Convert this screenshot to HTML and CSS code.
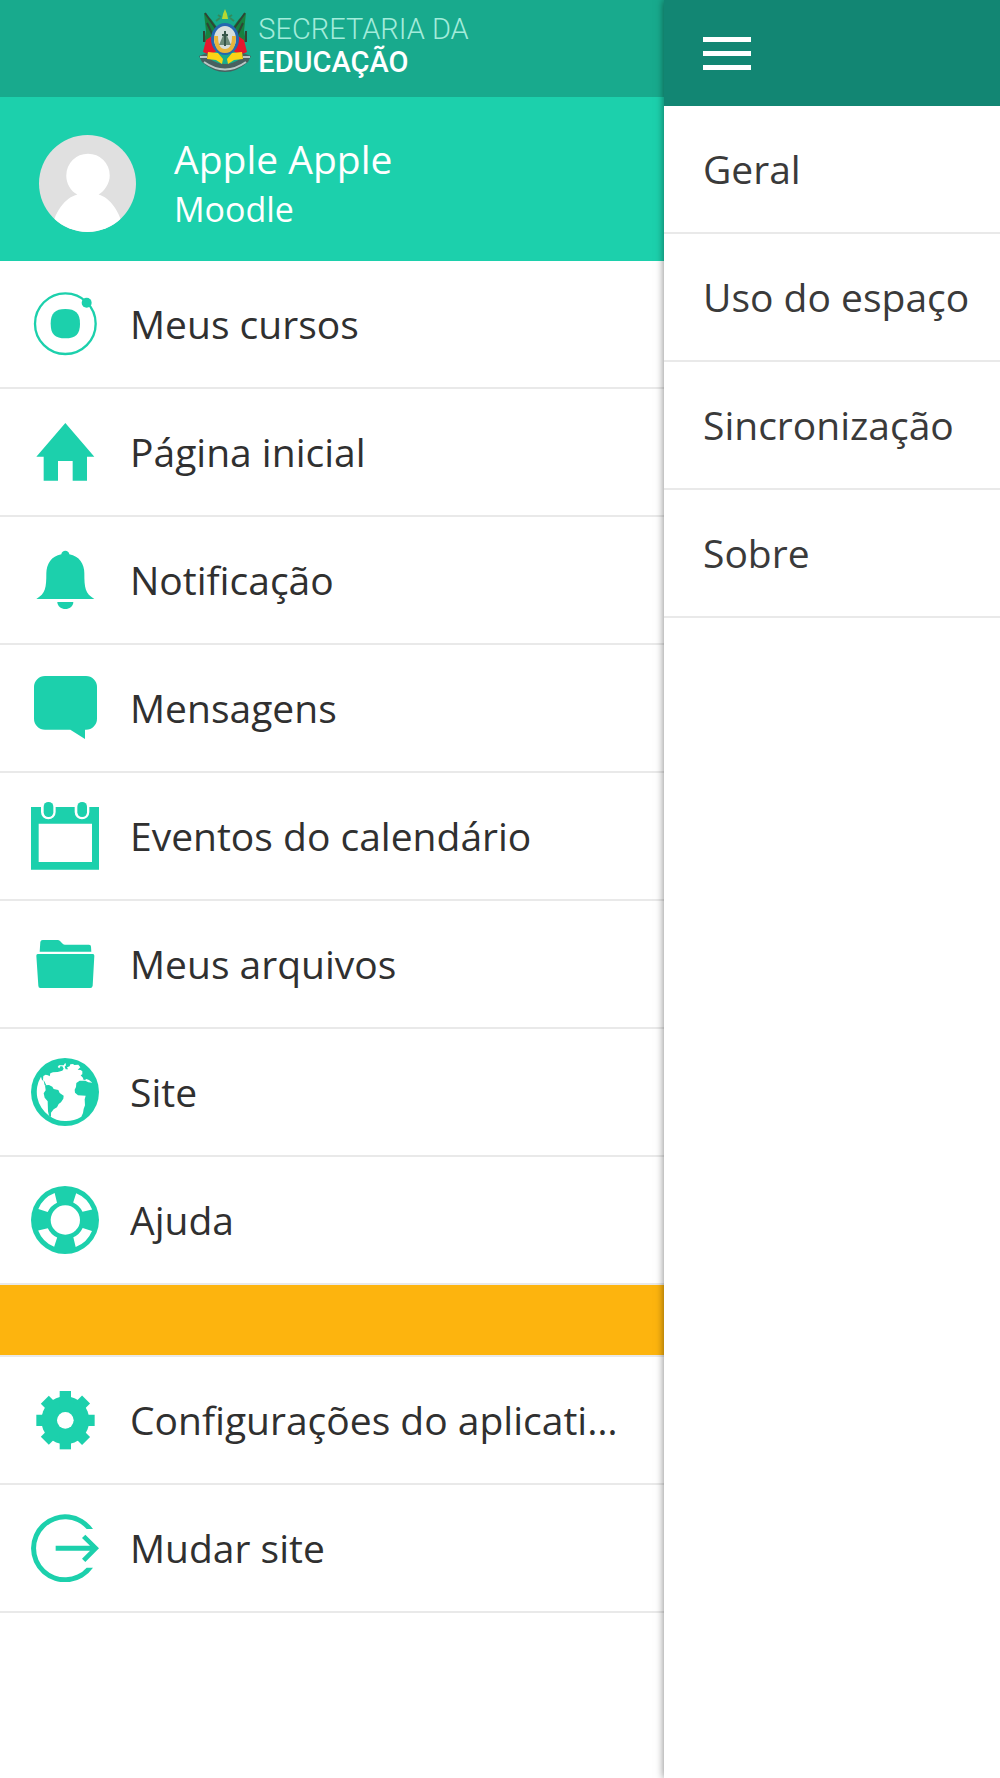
FILE: index.html
```html
<!DOCTYPE html>
<html lang="pt-BR">
<head>
    <meta charset="UTF-8">
    <meta name="viewport" content="width=device-width, initial-scale=1.0">
    <title>Moodle - Secretaria da Educação</title>
    <link rel="stylesheet" href="styles.css">
</head>
<body>
    <div class="app">
        <aside class="side-menu">
            <header class="brand">
                <svg class="crest" viewBox="0 0 54 66" aria-hidden="true">
                    <path d="M6 4 L13 10 L19 18 L20 34 L6 33 L8 22 L7 13 Z" fill="#17803f"/>
                    <path d="M48 4 L41 10 L35 18 L34 34 L48 33 L46 22 L47 13 Z" fill="#17803f"/>
                    <path d="M7 4 L19 21 M47 4 L35 21 M9 14 L16 29 M45 14 L38 29 M6 33 V22 M48 33 V22" stroke="#2f4434" stroke-width="2" fill="none"/>
                    <path d="M8 31 L14 27 L19 42 L12 46 L5 43 Z M46 31 L40 27 L35 42 L42 46 L49 43 Z" fill="#e5162d"/>
                    <path d="M1 47 L9 44 L12 50 Q27 60 42 50 L45 44 L53 47 L50 53 Q27 73 4 53 Z" fill="#48605f"/>
                    <path d="M2 48 L9 48 M45 48 L52 48 M6 53 Q27 68 48 53" stroke="#b9c8c6" stroke-width="2" fill="none"/>
                    <path d="M10 43 L20 44 L25 50 L24 55 L18 51 L9 50 Z M44 43 L34 44 L29 50 L30 55 L36 51 L45 50 Z" fill="#fbd315"/>
                    <ellipse cx="27" cy="30" rx="14" ry="16" fill="#2468b0"/>
                    <ellipse cx="27" cy="30" rx="11" ry="13" fill="#d6dfdc"/>
                    <path d="M18 27 Q18 42 27 42 Q36 42 36 27" stroke="#e9b43b" stroke-width="4" fill="none"/>
                    <path d="M21 36 L27 22 L33 36 Z" fill="#6c8a78"/>
                    <path d="M24 26 H30 M27 22 V37" stroke="#38564a" stroke-width="2"/>
                    <path d="M27 0 L29 5 L30 10 H24 L25 5 Z" fill="#b5d832"/>
                    <path d="M18 12 L22 9 M36 12 L32 9 M20 6 L23 8 M34 6 L31 8" stroke="#338a5c" stroke-width="2"/>
                </svg>
                <div class="brand-name">
                    <span>SECRETARIA DA</span>
                    <strong>EDUCAÇÃO</strong>
                </div>
            </header>

            <div class="profile">
                <svg class="avatar" viewBox="0 0 96 96" role="img" aria-label="Apple Apple">
                    <clipPath id="avatar-clip"><circle cx="48" cy="48" r="48"/></clipPath>
                    <g clip-path="url(#avatar-clip)">
                        <rect width="96" height="96" fill="#e0e0e0"/>
                        <path d="M12 96 C15 76 26 62 38 59 C31 55 27 48 27 40 A21.500 21.500 0 0 1 70 40 C70 48 65 55 59 59 C70 62 81 76 84 96 Z" fill="#fff"/>
                    </g>
                </svg>
                <div class="profile-text">
                    <div class="profile-name">Apple Apple</div>
                    <div class="profile-site">Moodle</div>
                </div>
            </div>

            <nav>
                <a class="item" href="#">
                    <svg class="icon" viewBox="0 0 204 204">
                        <circle cx="103" cy="101" r="91" fill="none" stroke="currentColor" stroke-width="7"/>
                        <path d="M103 57 C134 57 147 70 147 101 C147 132 134 145 103 145 C72 145 59 132 59 101 C59 70 72 57 103 57 Z"/>
                        <circle cx="167" cy="38" r="15"/>
                    </svg>
                    <span>Meus cursos</span>
                </a>
                <a class="item" href="#">
                    <svg class="icon" viewBox="0 0 204 204">
                        <path d="M103 15 L190 116 H168 V188 H125 V129 H81 V188 H38 V116 H16 Z"/>
                    </svg>
                    <span>Página inicial</span>
                </a>
                <a class="item" href="#">
                    <svg class="icon" viewBox="0 0 204 204">
                        <path d="M91 25 C92 11 114 11 115 25 C145 30 160 55 160 82 C160 125 162 143 190 159 H16 C44 143 46 125 46 82 C46 55 61 30 91 25 Z"/>
                        <path d="M79 168 H127 C126 196 80 196 79 168 Z"/>
                    </svg>
                    <span>Notificação</span>
                </a>
                <a class="item" href="#">
                    <svg class="icon" viewBox="0 0 204 204">
                        <path d="M42 6 H165 A33 33 0 0 1 198 39 V134 A33 33 0 0 1 165 167 H162 V195 L118 167 H42 A33 33 0 0 1 9 134 V39 A33 33 0 0 1 42 6 Z"/>
                    </svg>
                    <span>Mensagens</span>
                </a>
                <a class="item" href="#">
                    <svg class="icon" viewBox="0 0 204 204">
                        <path fill-rule="evenodd" d="M0 15 H30 V30 A22 22 0 0 0 74 30 V15 H131 V30 A22 22 0 0 0 175 30 V15 H204 V203 H0 Z M23 65 V180 H183 V65 Z"/>
                        <rect x="38" y="0" width="29" height="45" rx="14"/>
                        <rect x="139" y="0" width="29" height="45" rx="14"/>
                    </svg>
                    <span>Eventos do calendário</span>
                </a>
                <a class="item" href="#">
                    <svg class="icon" viewBox="0 0 204 204">
                        <path d="M26 65 L28 36 Q29 30 35 30 H80 Q84 30 87 33 L95 41 Q98 44 102 44 H174 Q180 44 180 50 L181 65 Z"/>
                        <path d="M20 72 H186 Q190 72 190 77 L185 167 Q184 174 178 174 H28 Q22 174 22 167 L16 77 Q16 72 20 72 Z"/>
                    </svg>
                    <span>Meus arquivos</span>
                </a>
                <a class="item" href="#">
                    <svg class="icon" viewBox="0 0 204 204">
                        <circle cx="102" cy="102" r="102"/>
                        <path fill="#fff" d="M30 56 L33 66 L38 69 L41 82 L46 82 L40 70 L36 67 L37 54 L44 50 L51 52 L56 55 L58 46 L66 43 L80 42 L94 38 L98 32 L94 25 L88 25 L85 31 L80 27 L84 22 L98 22 L103 14 L105 22 L101 26 L104 34 L111 34 L108 28 L116 25 L118 19 L126 18 L130 21 L142 20 L148 28 L140 35 L149 36 L154 40 L154 49 L149 52 L157 61 L155 64 L162 66 L166 63 L174 66 L184 74 L172 73 L163 68 L146 68 L136 75 L135 87 L131 95 L132 104 L141 112 L164 113 L161 124 L162 142 L158 153 L156 165 L151 176 A88 88 0 0 1 54 173 A88 88 0 0 1 30 56 Z"/>
                        <path d="M42 82 L54 81 L64 86 L68 93 L82 96 L86 105 L98 113 L97 122 L90 133 L83 138 L78 148 L68 154 L60 164 L60 177 L54 173 L51 160 L50 130 L41 119 L38 106 L44 97 Z"/>
                    </svg>
                    <span>Site</span>
                </a>
                <a class="item" href="#">
                    <svg class="icon" viewBox="0 0 204 204">
                        <circle cx="102" cy="102" r="102"/>
                        <circle cx="103" cy="102" r="44" fill="#fff"/>
                        <g fill="#fff">
                            <path id="buoy-gap" d="M71 21 L78 50 A57 57 0 0 0 50 78 L22 69 A86 86 0 0 1 71 21 Z"/>
                            <use href="#buoy-gap" transform="rotate(90 102.500 102)"/>
                            <use href="#buoy-gap" transform="rotate(180 102.500 102)"/>
                            <use href="#buoy-gap" transform="rotate(270 102.500 102)"/>
                        </g>
                    </svg>
                    <span>Ajuda</span>
                </a>

                <div class="divider"></div>

                <a class="item" href="#">
                    <svg class="icon" viewBox="0 0 204 204">
                        <circle cx="103" cy="103" r="72"/>
                        <path id="gear-tooth" d="M86 15 H120 V190 H86 Z"/>
                        <use href="#gear-tooth" transform="rotate(45 103 103)"/>
                        <use href="#gear-tooth" transform="rotate(90 103 103)"/>
                        <use href="#gear-tooth" transform="rotate(135 103 103)"/>
                        <circle cx="103" cy="103" r="25" fill="#fff"/>
                    </svg>
                    <span>Configurações do aplicativo</span>
                </a>
                <a class="item" href="#">
                    <svg class="icon" viewBox="0 0 204 204">
                        <path d="M186 45 A102 102 0 1 0 186 161 H167 A87 87 0 1 1 167 45 Z"/>
                        <path d="M74 95 H177 L153 72 L163 62 L204 103 L163 144 L153 134 L177 110 H74 Z"/>
                    </svg>
                    <span>Mudar site</span>
                </a>
            </nav>
        </aside>

        <main class="content">
            <header class="topbar">
                <button class="menu-toggle" type="button" aria-label="Menu">
                    <i></i>
                    <i></i>
                    <i></i>
                </button>
            </header>
            <nav class="settings">
                <a class="item" href="#"><span>Geral</span></a>
                <a class="item" href="#"><span>Uso do espaço</span></a>
                <a class="item" href="#"><span>Sincronização</span></a>
                <a class="item" href="#"><span>Sobre</span></a>
            </nav>
        </main>
    </div>
</body>
</html>
```
FILE: styles.css
```css
* {
    box-sizing: border-box;
}
body {
    margin: 0;
    background: #fff;
    color: #303030;
    font-family: "Open Sans", "Noto Sans", sans-serif;
    font-size: 39px;
}
.app {
    display: flex;
    min-height: 100vh;
    overflow: hidden;
}
.side-menu {
    width: 66.4%;
}
.content {
    flex: 1;
    min-width: 0;
    background: #fff;
    color: #3a3a3a;
    box-shadow: 0 0 8px rgba(0, 0, 0, 0.5);
}

/* logo */
.brand {
    display: flex;
    justify-content: center;
    gap: 6px;
    height: 97px;
    padding: 9px 0 0 3px;
    background: #18aa8d;
}
.crest {
    width: 54px;
    height: 66px;
}
.brand-name {
    display: flex;
    flex-direction: column;
    padding-top: 4px;
    color: #fff;
    font-family: Roboto, sans-serif;
    font-size: 29px;
    line-height: 33px;
}
.brand-name span {
    color: #a3ecdb;
    font-weight: 300;
}
.brand-name strong {
    font-weight: 500;
}

/* user */
.profile {
    display: flex;
    align-items: center;
    gap: 38px;
    height: 164px;
    padding: 8px 39px 0;
    background: #1cd0ac;
    color: #fff;
}
.avatar {
    width: 97px;
    height: 97px;
}
.profile-name {
    line-height: 52px;
}
.profile-site {
    font-size: 34px;
    line-height: 48px;
}

/* lists */
.item {
    display: flex;
    align-items: center;
    gap: 31px;
    height: 128px;
    padding: 0 40px 0 31px;
    border-bottom: 2px solid #e9e9e9;
    color: inherit;
    text-decoration: none;
}
.item span {
    overflow: hidden;
    padding-bottom: 2px;
    text-overflow: ellipsis;
    white-space: nowrap;
}
.icon {
    flex: none;
    width: 68px;
    height: 68px;
    color: #1cd0ac;
    fill: currentColor;
}
.divider {
    height: 72px;
    background: #fdb40e;
    border-bottom: 2px solid #e9e9e9;
}

/* right page */
.topbar {
    display: flex;
    align-items: center;
    height: 106px;
    padding-left: 39px;
    background: #128673;
}
.menu-toggle {
    display: flex;
    flex-direction: column;
    gap: 9px;
    padding: 0;
    border: none;
    background: none;
    cursor: pointer;
}
.menu-toggle i {
    width: 48px;
    height: 5px;
    background: #fff;
}
.settings .item {
    padding: 0 20px 0 39px;
}
```
